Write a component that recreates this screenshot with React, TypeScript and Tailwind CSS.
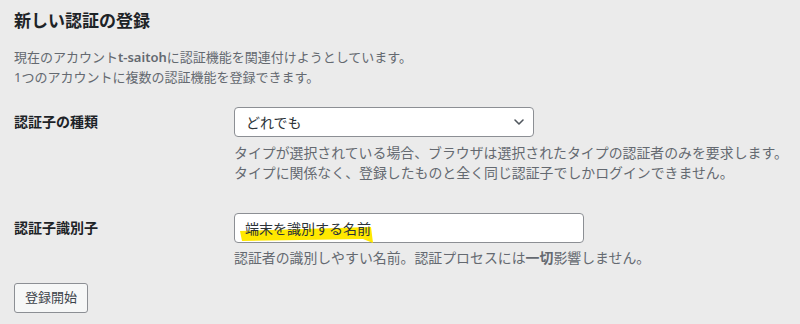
import { ChevronDown } from "lucide-react";

const font = {
  fontFamily: '"Noto Sans", "Noto Sans CJK JP", sans-serif',
};

function Marker() {
  // 画面キャプチャ上の蛍光ペンの書き込み
  return (
    <svg
      className="absolute left-[3px] top-[13px] pointer-events-none"
      width="140"
      height="18"
      viewBox="0 0 140 18"
    >
      <path
        d="M2 4 L133 0 L135 16 L125 12 L4 14 Z"
        fill="#ffe800"
      />
    </svg>
  );
}

export default function App() {
  return (
    <div
      className="w-[800px] h-[324px] bg-[#ebebeb] px-[14px] overflow-hidden text-[#1d2327]"
      style={font}
    >
      <h2 className="mt-[9px] text-[17px] leading-[24px] font-bold">
        新しい認証の登録
      </h2>
      <p className="mt-[14px] text-[13px] leading-[20px] text-[#646970]">
        現在のアカウント<strong className="font-semibold">t-saitoh</strong>
        に認証機能を関連付けようとしています。
        <br />
        1つのアカウントに複数の認証機能を登録できます。
      </p>

      {/* 認証子の種類 */}
      <div className="mt-[20px] grid grid-cols-[220px_1fr]">
        <label className="text-[14px] leading-[30px] font-bold">
          認証子の種類
        </label>
        <div>
          <div className="w-[300px] h-[30px] flex items-center justify-between bg-white border border-[#8c8f94] rounded-[4px] pl-[11px] pr-[6px] text-[14px] text-[#2c3338]">
            <span>どれでも</span>
            <ChevronDown size={16} strokeWidth={2.4} color="#50575e" />
          </div>
          <p className="mt-[6px] text-[13.9px] leading-[20px] text-[#646970] whitespace-nowrap">
            タイプが選択されている場合、ブラウザは選択されたタイプの認証者のみを要求します。
            <br />
            タイプに関係なく、登録したものと全く同じ認証子でしかログインできません。
          </p>
        </div>
      </div>

      {/* 認証子識別子 */}
      <div className="mt-[30px] grid grid-cols-[220px_1fr]">
        <label className="text-[14px] leading-[30px] font-bold">
          認証子識別子
        </label>
        <div>
          <div className="relative w-[350px] h-[30px] flex items-center bg-white border border-[#8c8f94] rounded-[4px] pl-[10px] text-[14px] text-[#2c3338]">
            <Marker />
            <span className="relative">端末を識別する名前</span>
          </div>
          <p className="mt-[5px] text-[13.9px] leading-[20px] text-[#646970] whitespace-nowrap">
            認証者の識別しやすい名前。認証プロセスには
            <strong className="font-bold">一切</strong>影響しません。
          </p>
        </div>
      </div>

      <button className="mt-[15px] w-[74px] h-[30px] bg-[#f6f7f7] border border-[#8c8f94] rounded-[3px] text-[13px] text-[#3c434a]">
        登録開始
      </button>
    </div>
  );
}
